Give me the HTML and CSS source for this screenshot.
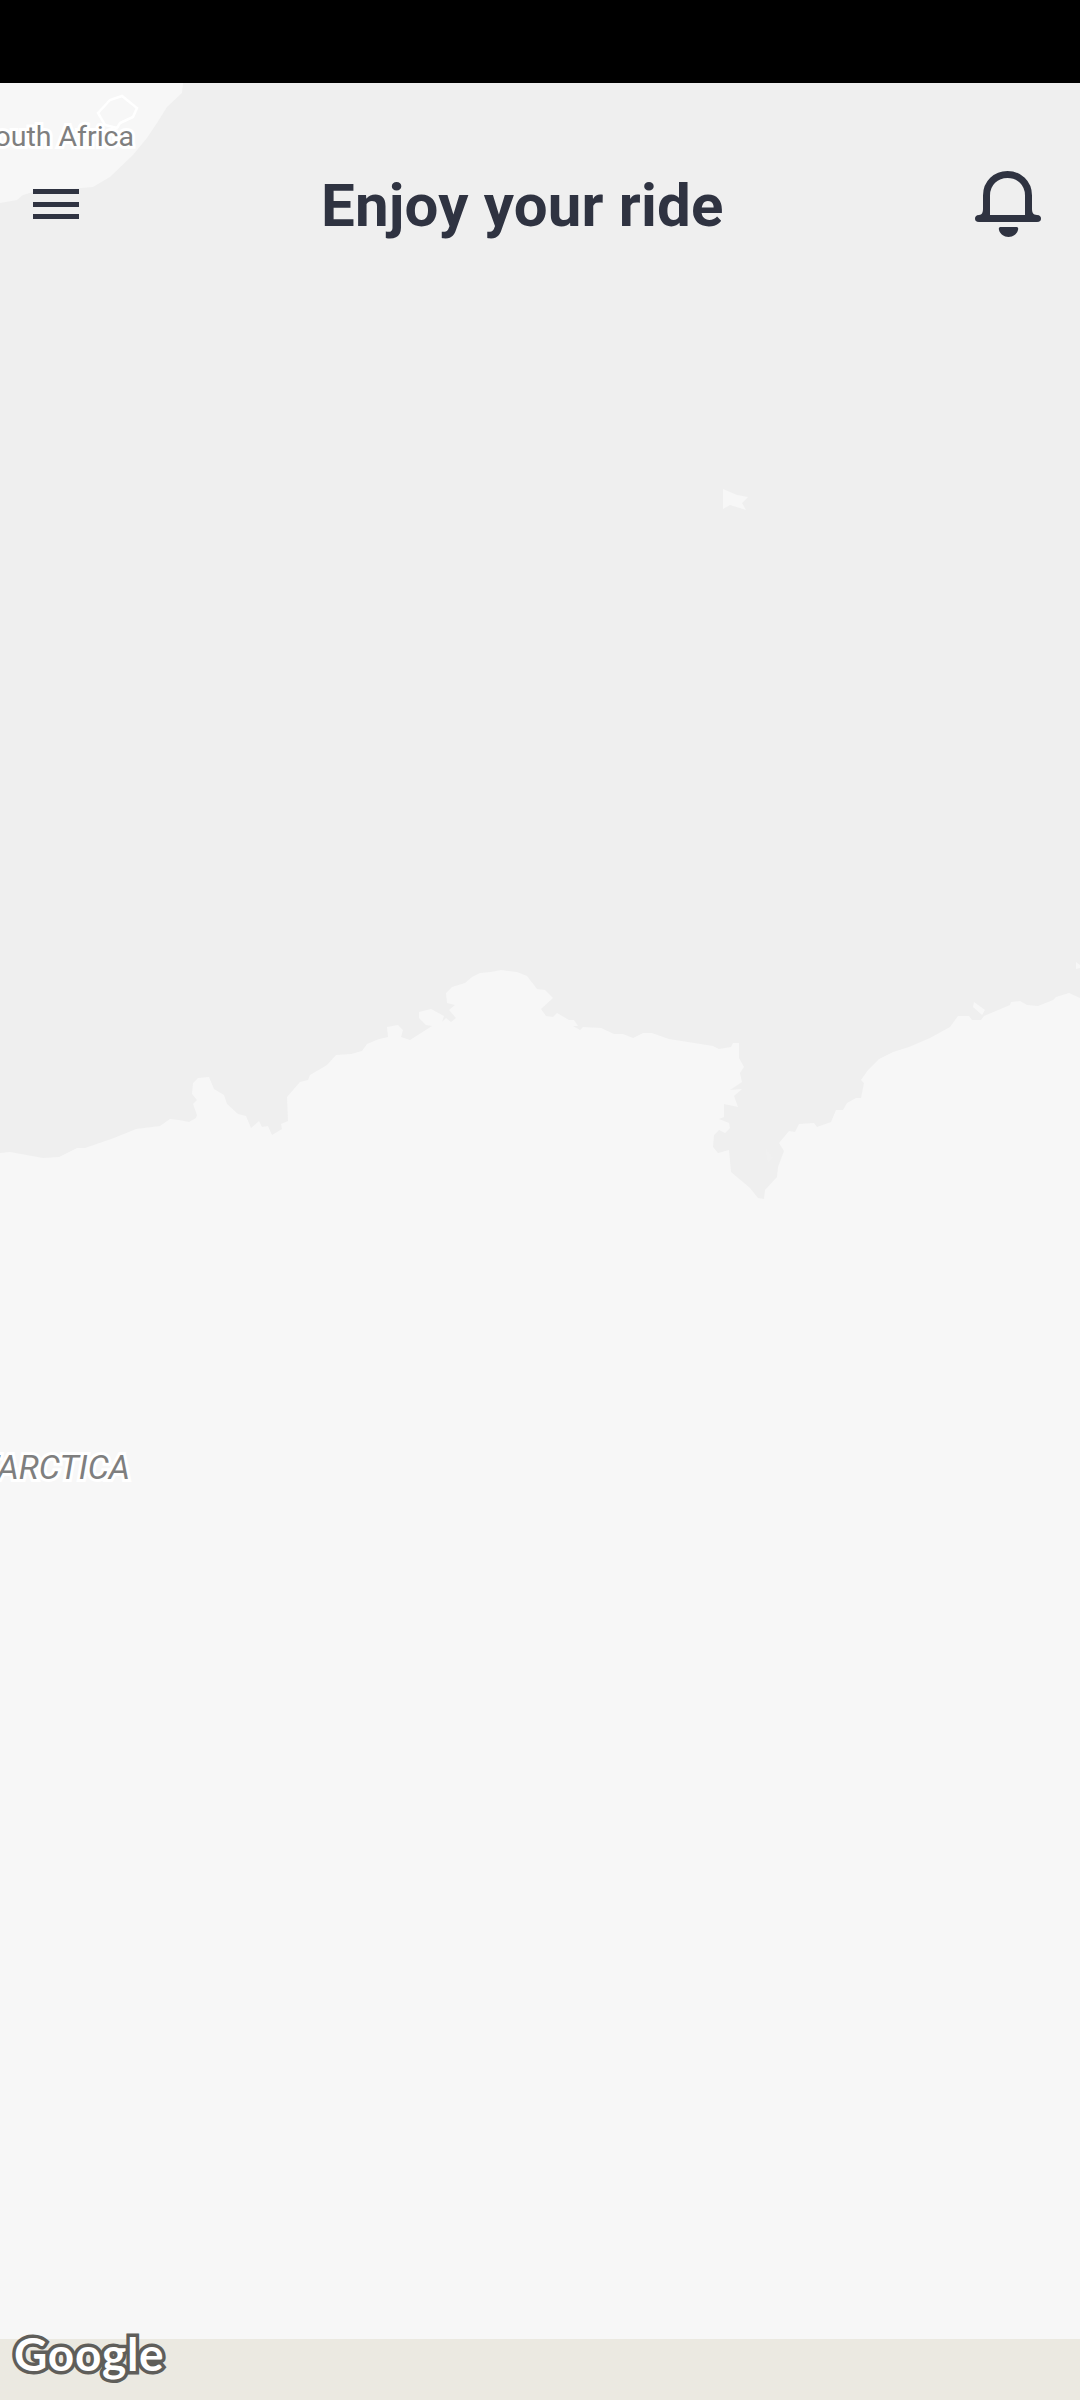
FILE: index.html
```html
<!DOCTYPE html>
<html lang="en">
<head>
<meta charset="utf-8">
<title>Enjoy your ride</title>
<link rel="stylesheet" href="styles.css">
</head>
<body>
<div class="screen">
  <div class="status-bar"></div>
  <main class="map">
    <svg class="map-art" viewBox="0 0 1080 2400" aria-hidden="true">
      <path class="land" d="M0 83H183L182 93L167 107L157 123L147 138L133 155L110 177L93 187L33 192L23 195L17 200L0 203Z"/>
      <path class="border" d="M98 113L110 100L122 96L137 108L133 117L120 123L117 128L105 125Z"/>
      <path class="land" d="M723 489L737 495L748 497L742 503L746 510L743 509L730 505L723 509Z"/>
      <path class="land" d="M1076 962L1080 965V968L1076 969Z"/>
      <path class="land" d="M974 1002L985 1010L982 1015L973 1007Z"/>
      <path class="land" d="M0 1153L10 1152L43 1158L59 1157L77 1148L85 1148L114 1138L136 1129L160 1126L170 1119L179 1120L189 1122L196 1118L197 1115L193 1104L197 1100L192 1094L193 1083L198 1078L209 1077L214 1089L224 1095L227 1104L238 1114L246 1116L251 1128L259 1121L262 1127L268 1126L272 1135L282 1129L281 1124L288 1121L287 1097L300 1082L308 1080L310 1075L327 1065L336 1055L351 1054L362 1051L367 1044L379 1039L388 1037L387 1027L398 1025L403 1030L401 1037L410 1040L432 1026L426 1025L419 1018L419 1012L431 1009L444 1016L442 1022L446 1018L451 1022L456 1018L449 1010L455 1005L447 1003L446 993L452 987L465 983L472 977L480 973L491 972L501 970L517 972L527 976L537 989L545 990L553 998L541 1009L546 1016L553 1017L557 1013L569 1020L574 1020L578 1026L573 1026L580 1030L583 1027L601 1028L614 1034L623 1034L633 1038L643 1033L652 1033L669 1039L713 1046L719 1049L731 1047L733 1043L739 1043L739 1058L744 1067L740 1073L742 1082L730 1090L742 1089L734 1096L738 1107L724 1104L724 1117L719 1119L729 1123L730 1128L725 1133L719 1130L714 1135L713 1147L718 1153L729 1150L731 1172L750 1188L758 1198L764 1199L765 1190L777 1177L778 1167L784 1151L779 1143L789 1131L795 1132L799 1124L814 1123L817 1127L831 1122L836 1110L843 1110L847 1103L856 1098L861 1098L864 1083L861 1080L868 1070L879 1059L893 1052L909 1047L930 1038L950 1027L958 1016L969 1016L972 1020L981 1020L984 1016L1010 1005L1011 1002L1020 1001L1027 1005L1038 1006L1053 1000L1056 997L1069 993L1080 998V2339H0Z"/>
      <path class="water" d="M765 1148L773 1158L768 1163Z"/>
    </svg>
    <span class="place place-country">South Africa</span>
    <span class="place place-continent">ANTARCTICA</span>
    <header class="top-bar">
      <button class="menu-button" aria-label="Menu"><span class="menu-bar"></span><span class="menu-bar"></span><span class="menu-bar"></span></button>
      <h1 class="title">Enjoy your ride</h1>
      <svg class="bell" viewBox="0 0 66 66" aria-label="Notifications">
        <path class="bell-body" d="M11.5 44V24.5C11.500 12 21 3.500 32.500 3.500C44 3.500 53.500 12 53.500 24.500V44"/>
        <path class="bell-base" d="M8 38H14V44H52V38H57C57 41 58 44 62 44C65 44 66 46 66 47.500C66 49.500 65 51 62 51H4C1 51 0 49.500 0 47.500C0 46 1 44 4 44C7 44 8 41 8 38Z"/>
        <path class="bell-clapper" d="M26 56H41C43 56 43.500 57 43 59C42 63 38 66 33.500 66C29 66 25 63 24 59C23.500 57 24 56 26 56Z"/>
      </svg>
    </header>
    <div class="google">Google</div>
  </main>
  <div class="bottom-strip"></div>
</div>
</body>
</html>
```

FILE: styles.css
```css
* { box-sizing: border-box; }
html, body { margin: 0; padding: 0; }
body { font-family: Roboto, "Liberation Sans", sans-serif; background: #ebe9e1; }
.screen { width: 1080px; height: 2400px; display: flex; flex-direction: column; overflow: hidden; }
.status-bar { height: 83px; background: #000; flex: none; }
.map { position: relative; flex: 1; background: #efefef; }
.bottom-strip { height: 61px; flex: none; background: #ebe9e1; }
.map-art { position: absolute; left: 0; top: -83px; width: 1080px; height: 2400px; }
.land { fill: #f7f7f7; }
.water { fill: #f0f0f0; }
.border { fill: none; stroke: #fff; stroke-width: 2.5; }
.place { position: absolute; color: #7f7f7f; white-space: nowrap; -webkit-text-stroke: 6px #fff; paint-order: stroke fill; }
.place-country { right: 946px; top: 37px; font-size: 28.5px; }
.place-continent { right: 950px; top: 1365px; font-size: 33.5px; font-style: italic; }
.top-bar { position: relative; height: 190px; display: flex; align-items: flex-start; }
.menu-button { width: 46px; height: 30px; margin: 106px 0 0 33px; padding: 0; border: 0; background: none; display: flex; flex-direction: column; justify-content: space-between; flex: none; }
.menu-bar { display: block; height: 5px; background: #2f3341; }
.title { margin: 88px 0 0 242px; font-size: 60px; line-height: 70px; font-weight: 700; letter-spacing: 0.2px; color: #2f3341; white-space: nowrap; flex: none; }
.bell { margin: 88px 39px 0 auto; width: 66px; height: 66px; flex: none; }
.bell-body { fill: none; stroke: #2f3341; stroke-width: 7; }
.bell-base, .bell-clapper { fill: #2f3341; }
.google { position: absolute; left: 14px; top: 2241px; font-family: Lato, sans-serif; font-size: 46px; line-height: 60px; font-weight: 700; letter-spacing: 0.7px; color: #fff; -webkit-text-stroke: 7px #5f5e5a; paint-order: stroke fill; }
```
